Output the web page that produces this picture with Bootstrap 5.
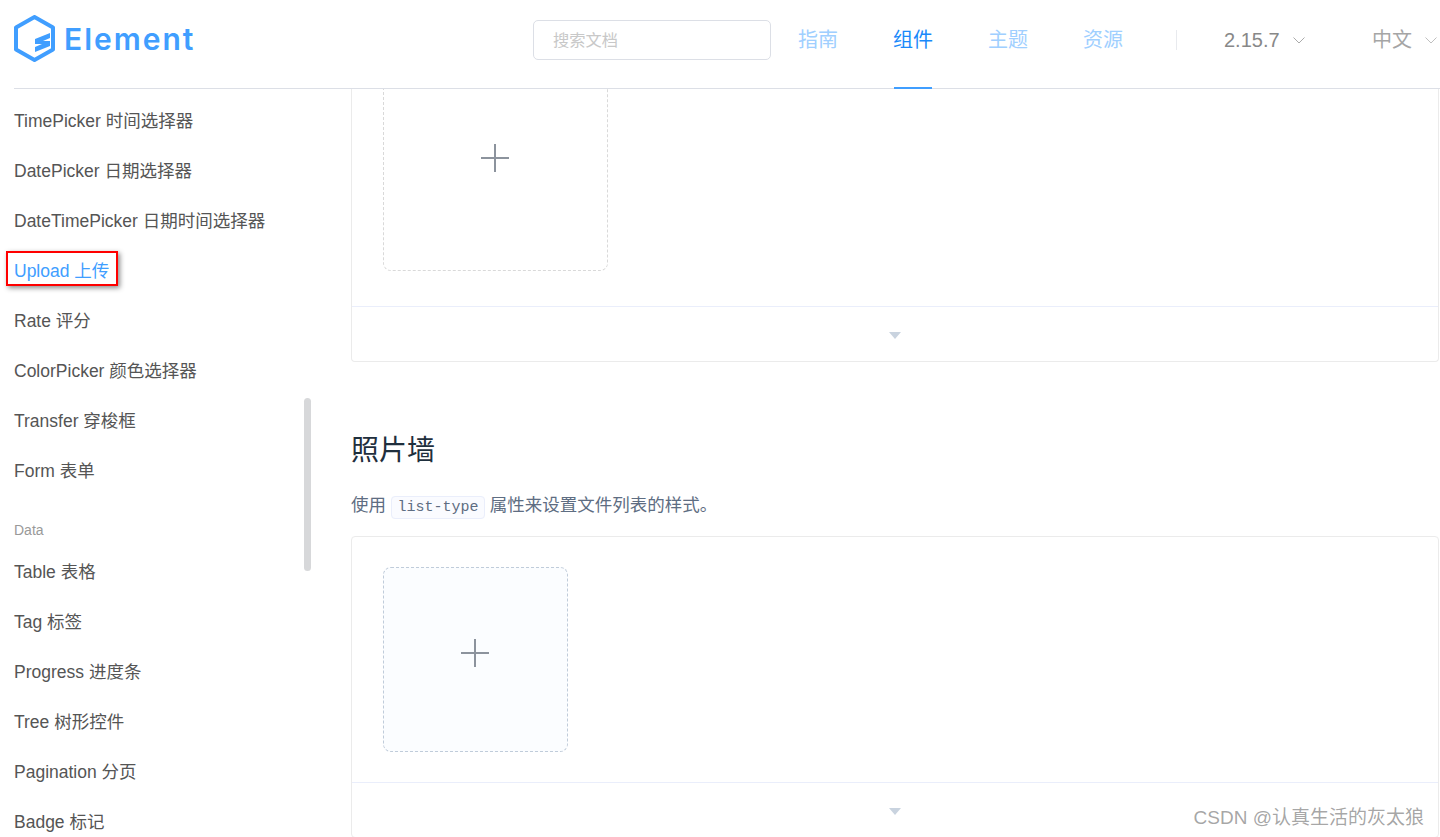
<!DOCTYPE html>
<html lang="zh-CN">
<head>
    <meta charset="UTF-8">
    <title>Upload 上传</title>
    <link rel="stylesheet" href="https://cdn.jsdelivr.net/npm/bootstrap@5.3.0/dist/css/bootstrap.min.css">
    <style>
        body {
            height: 837px;
            overflow: hidden;
            background: #fff;
            color: #48576a;
            font-family: "Liberation Sans", "Noto Sans CJK SC", sans-serif;
        }
        .site-header {
            height: 89px;
            margin-left: 14px;
            padding-bottom: 8px;
            border-bottom: 1px solid #dcdfe6;
        }
        .logo-mark { margin-top: -3px; }
        .logo-text {
            width: 135px;
            margin-left: 8px;
            margin-bottom: 2px;
            color: #409eff;
            font-family: Inter, sans-serif;
            font-size: 30px;
            font-weight: 600;
            letter-spacing: 2px;
            line-height: 1;
        }
        .search-box {
            width: 238px;
            height: 40px;
            margin-left: 334px;
            padding: 0 19px;
            border: 1px solid #dcdfe6;
            border-radius: 5px;
            color: #c8c8c8;
            font-size: 16.25px;
        }
        .top-link {
            position: relative;
            width: 40px;
            margin-left: 55px;
            color: #a0cfff;
            font-size: 20px;
        }
        .search-box + .top-link { margin-left: 27px; }
        .top-link.is-active { color: #1989fa; }
        .top-link.is-active::after {
            content: "";
            position: absolute;
            left: 1px;
            right: 1px;
            bottom: -34px;
            height: 2px;
            background: #409eff;
        }
        .head-sep {
            width: 1px;
            height: 20px;
            margin-left: 53px;
            background: #e8eaee;
        }
        .head-drop {
            font-size: 20px;
            color: #888;
        }
        .head-version { margin-left: 47px; }
        .head-drop svg { margin-left: 13px; }
        .head-lang { margin-right: 3px; opacity: .75; }
        .page-body { height: 748px; }
        .side-menu {
            position: relative;
            width: 351px;
            padding-top: 7px;
            flex: none;
        }
        .side-item {
            height: 50px;
            padding-left: 14px;
            color: #555;
            font-size: 17.5px;
            line-height: 50px;
        }
        .side-group {
            height: 30px;
            margin-top: 21px;
            padding-left: 14px;
            color: #999;
            font-size: 14px;
            line-height: 26px;
        }
        .side-item.is-current { color: #409eff; }
        .side-item.is-current span {
            position: relative;
            display: inline-block;
        }
        .side-item.is-current span::before {
            content: "";
            position: absolute;
            top: 5px;
            left: -8px;
            right: -9px;
            bottom: 10px;
            border: 2px solid #f00;
            box-shadow: 2px 2px 5px rgba(0, 0, 0, .45);
        }
        .side-scroll {
            position: absolute;
            top: 309px;
            left: 304px;
            width: 7px;
            height: 173px;
            border-radius: 4px;
            background: #d7d8da;
        }
        .demo-box {
            margin-right: 1px;
            border: 1px solid #ebebeb;
            border-radius: 4px;
        }
        .demo-box.is-cut-top {
            border-top: 0;
            border-radius: 0 0 4px 4px;
        }
        .demo-body { padding: 30px 31px 30px; }
        .is-cut-top .demo-body { padding-top: 0; padding-bottom: 35px; }
        .upload-card {
            width: 225px;
            height: 182px;
            padding-bottom: 44px;
            border: 1px dashed #d9d9d9;
            border-top: 0;
            border-radius: 0 0 8px 8px;
        }
        .upload-wall {
            width: 185px;
            height: 185px;
            padding-bottom: 13px;
            border: 1px dashed #c0ccda;
            border-radius: 8px;
            background: #fbfdff;
        }
        .plus-mark { margin-right: 1px; }
        .demo-ctrl {
            height: 55px;
            border-top: 1px solid #eaeefb;
        }
        .ctrl-caret {
            width: 0;
            height: 0;
            border-top: 7px solid #c9d3df;
            border-left: 6.5px solid transparent;
            border-right: 6.5px solid transparent;
            margin-top: 2px;
        }
        .demo-title {
            margin: 0;
            padding-top: 71px;
            color: #1f2f3d;
            font-size: 28px;
            font-weight: 400;
            line-height: 36px;
        }
        .demo-desc {
            margin: 0;
            padding: 22px 0 14px;
            color: #5e6d82;
            font-size: 17.5px;
            line-height: 28px;
        }
        .demo-desc code {
            padding: 2px 5.5px;
            border: 1px solid #eaeefb;
            border-radius: 4px;
            background: #fafbff;
            color: #5e6d82;
            font-family: "Liberation Mono", monospace;
            font-size: 15px;
        }
        .watermark {
            position: absolute;
            right: 16px;
            bottom: 5px;
            color: rgba(90, 90, 90, .55);
            font-size: 19px;
            line-height: 28px;
        }
    </style>
</head>
<body>

    <header class="site-header d-flex align-items-center">
        <svg class="logo-mark" width="42" height="47" viewBox="0 0 42 47" fill="none">
            <path d="M20.500 2 39 12.500V34.500L20.500 45 2 34.500V12.500Z" stroke="#409eff" stroke-width="4" stroke-linejoin="round"/>
            <path d="M21 24 36 18V23L29 26H36V31L21 37V32L28 29H21Z" fill="#409eff"/>
        </svg>
        <div class="logo-text">Element</div>
        <div class="search-box d-flex align-items-center">搜索文档</div>
        <div class="top-link">指南</div>
        <div class="top-link is-active">组件</div>
        <div class="top-link">主题</div>
        <div class="top-link">资源</div>
        <div class="head-sep"></div>
        <div class="head-drop head-version d-flex align-items-center">2.15.7
            <svg width="12" height="7" viewBox="0 0 12 7" fill="none"><path d="M.5.5 6 6 11.500.5" stroke="#aaa"/></svg>
        </div>
        <div class="head-drop head-lang d-flex align-items-center ms-auto">中文
            <svg width="12" height="7" viewBox="0 0 12 7" fill="none"><path d="M.5.5 6 6 11.500.5" stroke="#aaa"/></svg>
        </div>
    </header>

    <div class="page-body d-flex">
        <aside class="side-menu">
            <div class="side-item">TimePicker 时间选择器</div>
            <div class="side-item">DatePicker 日期选择器</div>
            <div class="side-item">DateTimePicker 日期时间选择器</div>
            <div class="side-item is-current"><span>Upload 上传</span></div>
            <div class="side-item">Rate 评分</div>
            <div class="side-item">ColorPicker 颜色选择器</div>
            <div class="side-item">Transfer 穿梭框</div>
            <div class="side-item">Form 表单</div>
            <div class="side-group">Data</div>
            <div class="side-item">Table 表格</div>
            <div class="side-item">Tag 标签</div>
            <div class="side-item">Progress 进度条</div>
            <div class="side-item">Tree 树形控件</div>
            <div class="side-item">Pagination 分页</div>
            <div class="side-item">Badge 标记</div>
            <div class="side-scroll"></div>
        </aside>

        <main class="flex-grow-1">
            <div class="demo-box is-cut-top">
                <div class="demo-body">
                    <div class="upload-card d-flex align-items-center justify-content-center">
                        <svg class="plus-mark" width="28" height="28" viewBox="0 0 28 28"><path d="M14 0V28M0 14H28" stroke="#8c939d" stroke-width="2"/></svg>
                    </div>
                </div>
                <div class="demo-ctrl d-flex align-items-center justify-content-center"><div class="ctrl-caret"></div></div>
            </div>

            <h3 class="demo-title">照片墙</h3>
            <p class="demo-desc">使用 <code>list-type</code> 属性来设置文件列表的样式。</p>

            <div class="demo-box">
                <div class="demo-body">
                    <div class="upload-wall d-flex align-items-center justify-content-center">
                        <svg class="plus-mark" width="28" height="28" viewBox="0 0 28 28"><path d="M14 0V28M0 14H28" stroke="#8c939d" stroke-width="2"/></svg>
                    </div>
                </div>
                <div class="demo-ctrl d-flex align-items-center justify-content-center"><div class="ctrl-caret"></div></div>
            </div>
        </main>
    </div>

    <div class="watermark">CSDN @认真生活的灰太狼</div>

</body>
</html>
